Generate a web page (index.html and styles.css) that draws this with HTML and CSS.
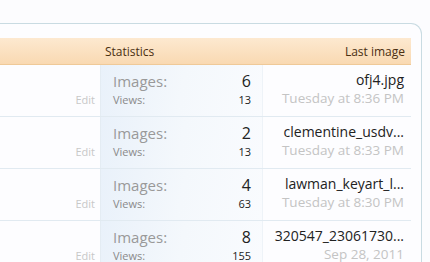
FILE: index.html
```html
<!DOCTYPE html>
<html lang="en">
<head>
    <meta charset="UTF-8">
    <meta name="viewport" content="width=device-width, initial-scale=1.0">
    <title>Albums</title>
    <link rel="stylesheet" href="styles.css">
</head>
<body>
    <div class="album-list">
        <div class="list-head">
            <div class="col-main"></div>
            <div class="col-stats">Statistics</div>
            <div class="col-last">Last image</div>
        </div>

        <div class="album-row">
            <div class="col-main"><a class="edit-link">Edit</a></div>
            <div class="col-stats stats-cell">
                <div class="stat-line big"><span class="label">Images:</span><span class="num">6</span></div>
                <div class="stat-line small"><span class="label">Views:</span><span class="num">13</span></div>
            </div>
            <div class="col-last last-cell">
                <div class="file-name">ofj4.jpg</div>
                <div class="file-date">Tuesday at 8:36 PM</div>
            </div>
        </div>

        <div class="album-row">
            <div class="col-main"><a class="edit-link">Edit</a></div>
            <div class="col-stats stats-cell">
                <div class="stat-line big"><span class="label">Images:</span><span class="num">2</span></div>
                <div class="stat-line small"><span class="label">Views:</span><span class="num">13</span></div>
            </div>
            <div class="col-last last-cell">
                <div class="file-name">clementine_usdv...</div>
                <div class="file-date">Tuesday at 8:33 PM</div>
            </div>
        </div>

        <div class="album-row">
            <div class="col-main"><a class="edit-link">Edit</a></div>
            <div class="col-stats stats-cell">
                <div class="stat-line big"><span class="label">Images:</span><span class="num">4</span></div>
                <div class="stat-line small"><span class="label">Views:</span><span class="num">63</span></div>
            </div>
            <div class="col-last last-cell">
                <div class="file-name">lawman_keyart_l...</div>
                <div class="file-date">Tuesday at 8:30 PM</div>
            </div>
        </div>

        <div class="album-row">
            <div class="col-main"><a class="edit-link">Edit</a></div>
            <div class="col-stats stats-cell">
                <div class="stat-line big"><span class="label">Images:</span><span class="num">8</span></div>
                <div class="stat-line small"><span class="label">Views:</span><span class="num">155</span></div>
            </div>
            <div class="col-last last-cell">
                <div class="file-name">320547_23061730...</div>
                <div class="file-date">Sep 28, 2011</div>
            </div>
        </div>
    </div>
</body>
</html>
```

FILE: styles.css
```css
body {
    margin: 0;
    background-color: #fcfcfe;
    font-family: 'Open Sans', 'Noto Sans', sans-serif;
    color: #333;
    overflow: hidden;
}
.album-list {
    margin: 23px 8px 0 -30px;
    padding: 14px 10px 0 30px;
    background-color: #fdfdff;
    border-top: 1px solid #c9dbe2;
    border-right: 1px solid #c9dbe2;
    border-top-right-radius: 11px;
}
.list-head,
.album-row {
    display: grid;
    grid-template-columns: 100px 163px 148px;
}
.list-head {
    height: 26px;
    line-height: 27px;
    font-size: 12px;
    color: #4a2f12;
    background: linear-gradient(to bottom, #fde9d0, #f9d9b2);
    border-bottom: 1px solid #efc998;
}
.list-head .col-stats {
    padding-left: 5px;
}
.list-head .col-last {
    text-align: right;
    padding-right: 6px;
}
.album-row {
    height: 51px;
    border-bottom: 1px solid #e1eaf1;
}
.album-row .col-main {
    display: flex;
    justify-content: flex-end;
    align-items: flex-end;
    padding: 0 5px 9px 0;
}
.edit-link {
    font-size: 11px;
    color: #c8c8c8;
}
.stats-cell {
    padding: 5px 11px 0 12px;
    border-left: 1px solid #e4ecf3;
    border-right: 1px solid #eef3f8;
    background: linear-gradient(100deg, #e9f1fa 0%, #f4f8fc 50%, #f9fbfe 100%);
}
.stat-line {
    display: flex;
    justify-content: space-between;
    align-items: baseline;
}
.stat-line.big {
    font-size: 15px;
    line-height: 22px;
}
.stat-line.big .label {
    color: #999;
}
.stat-line.big .num {
    font-size: 16px;
}
.stat-line.small {
    font-size: 11px;
    line-height: 16px;
}
.stat-line.small .label {
    color: #8a8a8a;
}
.stat-line .num {
    color: #222;
}
.last-cell {
    padding: 6px 7px 0 0;
    text-align: right;
    line-height: 18px;
}
.file-name {
    font-size: 14px;
    color: #222;
}
.file-date {
    font-size: 13.5px;
    color: #c4c4c4;
}
```
